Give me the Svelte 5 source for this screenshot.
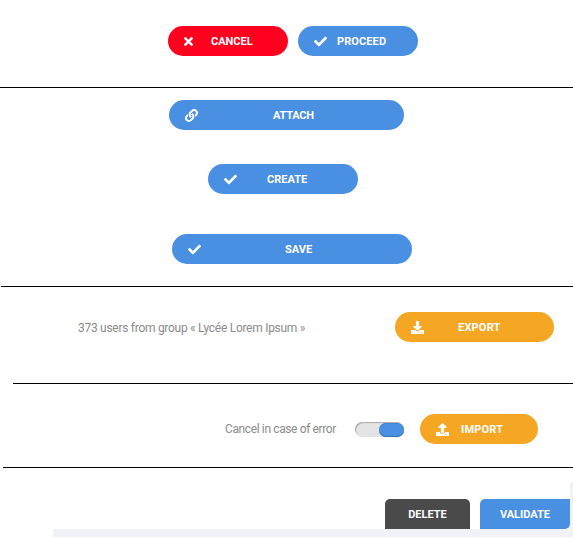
<script>
  const icons = {
    times: { box: '0 0 352 512', w: 9, h: 13, d: 'M243 256l100-100c12-12 12-32 0-44l-22-23c-12-12-32-12-45 0L176 189 76 89C63 77 43 77 31 89L9 112c-12 12-12 32 0 44l100 100L9 356c-12 12-12 32 0 45l22 22c12 12 32 12 45 0l100-100 100 100c13 12 33 12 45 0l22-22c12-13 12-33 0-45z' },
    check: { box: '0 0 512 512', w: 13, h: 13, d: 'M173.9 439.4L7.5 273c-10-10-10-26.200 0-36.200l36.200-36.200c10-10 26.200-10 36.200 0L192 312.700 432.100 72.600c10-10 26.200-10 36.200 0l36.200 36.200c10 10 10 26.200 0 36.200L210.100 439.400c-10 10-26.200 10-36.200 0z' },
    link: { box: '0 0 512 512', w: 13, h: 13, d: 'M326.600 185.400c59.700 59.800 58.900 155.700.400 214.600l-.400.400-67.200 67.200c-59.300 59.300-155.700 59.300-215 0s-59.300-155.700 0-215l37.100-37.100c9.800-9.800 26.800-3.300 27.300 10.600.600 17.700 3.800 35.500 9.700 52.700 2 5.800.600 12.300-3.800 16.600l-13.100 13.100c-28 28-28.900 73.700-1.200 102 28 28.600 74.100 28.700 102.300.500l67.200-67.200c28.200-28.200 28.100-73.800 0-101.800-3.700-3.700-7.400-6.600-10.300-8.600a16 16 0 0 1-6.900-12.600c-.400-10.600 3.300-21.500 11.700-29.800l21.100-21.100c5.500-5.500 14.200-6.200 20.600-1.700a152 152 0 0 1 20.500 17.200zM467.500 44.400c-59.300-59.300-155.700-59.300-215 0l-67.200 67.200-.4.400c-58.600 58.900-59.400 154.800.4 214.600a152 152 0 0 0 20.500 17.200c6.400 4.500 15.100 3.800 20.600-1.700l21.100-21.100c8.400-8.400 12.100-19.200 11.700-29.800a16 16 0 0 0-6.900-12.600c-2.900-2-6.600-4.900-10.300-8.600-28.100-28.100-28.200-73.600 0-101.800l67.200-67.200c28.200-28.200 74.300-28.100 102.300.5 27.800 28.300 26.900 73.900-1.200 102l-13.100 13.100c-4.400 4.400-5.800 10.800-3.800 16.600 5.900 17.200 9 35 9.700 52.700.5 13.900 17.500 20.400 27.300 10.600l37.100-37.100c59.300-59.400 59.300-155.800 0-215z' },
    download: { box: '0 0 512 512', w: 13, h: 13, d: 'M216 0h80c13 0 24 11 24 24v168h88c18 0 27 21 14 34L270 378c-8 7-20 7-28 0L90 226c-12-13-3-34 14-34h88V24c0-13 11-24 24-24zM512 376v112c0 13-11 24-24 24H24c-13 0-24-11-24-24V376c0-13 11-24 24-24h146l50 49c20 20 52 20 72 0l50-49h146c13 0 24 11 24 24zM388 464a20 20 0 1 0-40 0 20 20 0 0 0 40 0zm64 0a20 20 0 1 0-40 0 20 20 0 0 0 40 0z' },
    upload: { box: '0 0 512 512', w: 13, h: 13, d: 'M296 384h-80c-13 0-24-11-24-24V192h-88c-17 0-26-21-14-34L242 6c8-8 20-8 28 0l152 152c13 13 4 34-14 34h-88v168c0 13-11 24-24 24zM512 376v112c0 13-11 24-24 24H24c-13 0-24-11-24-24V376c0-13 11-24 24-24h136v8c0 31 25 56 56 56h80c31 0 56-25 56-56v-8h136c13 0 24 11 24 24zM388 464a20 20 0 1 0-40 0 20 20 0 0 0 40 0zm64 0a20 20 0 1 0-40 0 20 20 0 0 0 40 0z' }
  };
</script>

{#snippet pill(name, icon, label)}
  <button class="pill {name}">
    <svg class="icon" viewBox={icons[icon].box} width={icons[icon].w} height={icons[icon].h}><path d={icons[icon].d} /></svg>
    <span>{label}</span>
  </button>
{/snippet}

<main>
  <section class="confirm">
    {@render pill('cancel', 'times', 'CANCEL')}
    {@render pill('proceed', 'check', 'PROCEED')}
  </section>
  <section class="actions">
    {@render pill('attach', 'link', 'ATTACH')}
    {@render pill('create', 'check', 'CREATE')}
    {@render pill('save', 'check', 'SAVE')}
  </section>
  <section class="export-row">
    <p class="users">373 users from group « Lycée Lorem Ipsum »</p>
    {@render pill('export', 'download', 'EXPORT')}
  </section>
  <section class="import-row">
    <p class="error">Cancel in case of error</p>
    <div class="switch"><i></i></div>
    {@render pill('import', 'upload', 'IMPORT')}
  </section>
  <footer>
    <div class="panel">
      <button class="tab delete">DELETE</button>
      <button class="tab validate">VALIDATE</button>
    </div>
    <div class="edge"></div>
  </footer>
</main>

<style>
  :global(body) { background: #fff; }
  main { width: 573px; height: 538px; overflow: hidden; font-family: Roboto, 'Open Sans', sans-serif; }
  section { display: flex; box-sizing: border-box; border-bottom: 1px solid #000; align-items: flex-start; }
  button { border: 0; margin: 0; padding: 0; font: 700 11px/28px Roboto, 'Open Sans', sans-serif; color: #fff; white-space: nowrap; }
  p { margin: 0; font-size: 12px; line-height: 18px; color: #8b8b8b; white-space: nowrap; flex: none; }
  .pill { display: flex; align-items: center; flex: none; box-sizing: border-box; height: 30px; padding-left: 16px; border-radius: 15px; background: #4a90e2; }
  .pill span { padding-top: 2px; }
  .icon { display: block; flex: none; fill: currentColor; }
  .confirm { height: 88px; padding: 26px 0 0 168px; gap: 10px; }
  .cancel { width: 120px; background: #ff001f; }
  .cancel span { margin-left: 18px; }
  .proceed { width: 120px; }
  .proceed span { margin-left: 10px; letter-spacing: 0.1px; }
  .actions { flex-direction: column; height: 199px; padding-top: 12px; margin-left: 1px; }
  .attach { width: 235px; margin-left: 168px; }
  .attach span { margin-left: 75px; letter-spacing: -0.2px; }
  .create { width: 150px; margin: 34px 0 0 207px; }
  .create span { margin-left: 30px; }
  .save { width: 240px; margin: 40px 0 0 171px; }
  .save span { margin-left: 84px; }
  .export-row { height: 97px; margin-left: 13px; padding: 25px 0 0 65px; }
  .users { width: 317px; margin-top: 7px; letter-spacing: -0.28px; }
  .export { width: 159px; background: #f5a623; }
  .export span { margin-left: 34px; letter-spacing: 0.2px; }
  .import-row { height: 84px; margin-left: 3px; padding: 30px 0 0 222px; }
  .error { width: 130px; margin-top: 6px; letter-spacing: -0.38px; }
  .switch { display: flex; justify-content: flex-end; box-sizing: border-box; width: 49px; height: 15px; margin: 8px 16px 0 0; border-radius: 8px; background: #e4e4e4; box-shadow: inset 1px 1px 1px #aaa; }
  .switch i { box-sizing: border-box; width: 25px; height: 14px; margin-top: 1px; border-radius: 7px; background: #4a90e2; box-shadow: inset 0 -1px 0 #356eb2, inset 0 1px 0 #3f83d4; }
  .import { width: 118px; background: #f5a623; }
  .import span { margin-left: 12px; letter-spacing: 0.2px; }
  footer { display: flex; height: 69px; margin-left: 53px; }
  .panel { display: flex; align-items: flex-start; justify-content: flex-end; gap: 10px; box-sizing: border-box; width: 517px; height: 69px; padding-top: 31px; border-bottom: 8px solid #f1f2f8; }
  .edge { width: 3px; height: 55px; margin-top: 14px; background: #f1f2f8; }
  .tab { box-sizing: border-box; height: 30px; padding-top: 2px; text-align: center; }
  .delete { width: 85px; background: #4a4a4a; border-radius: 5px 5px 0 0; }
  .validate { width: 90px; background: #4a90e2; border-radius: 5px 0 5px 0; }
</style>
